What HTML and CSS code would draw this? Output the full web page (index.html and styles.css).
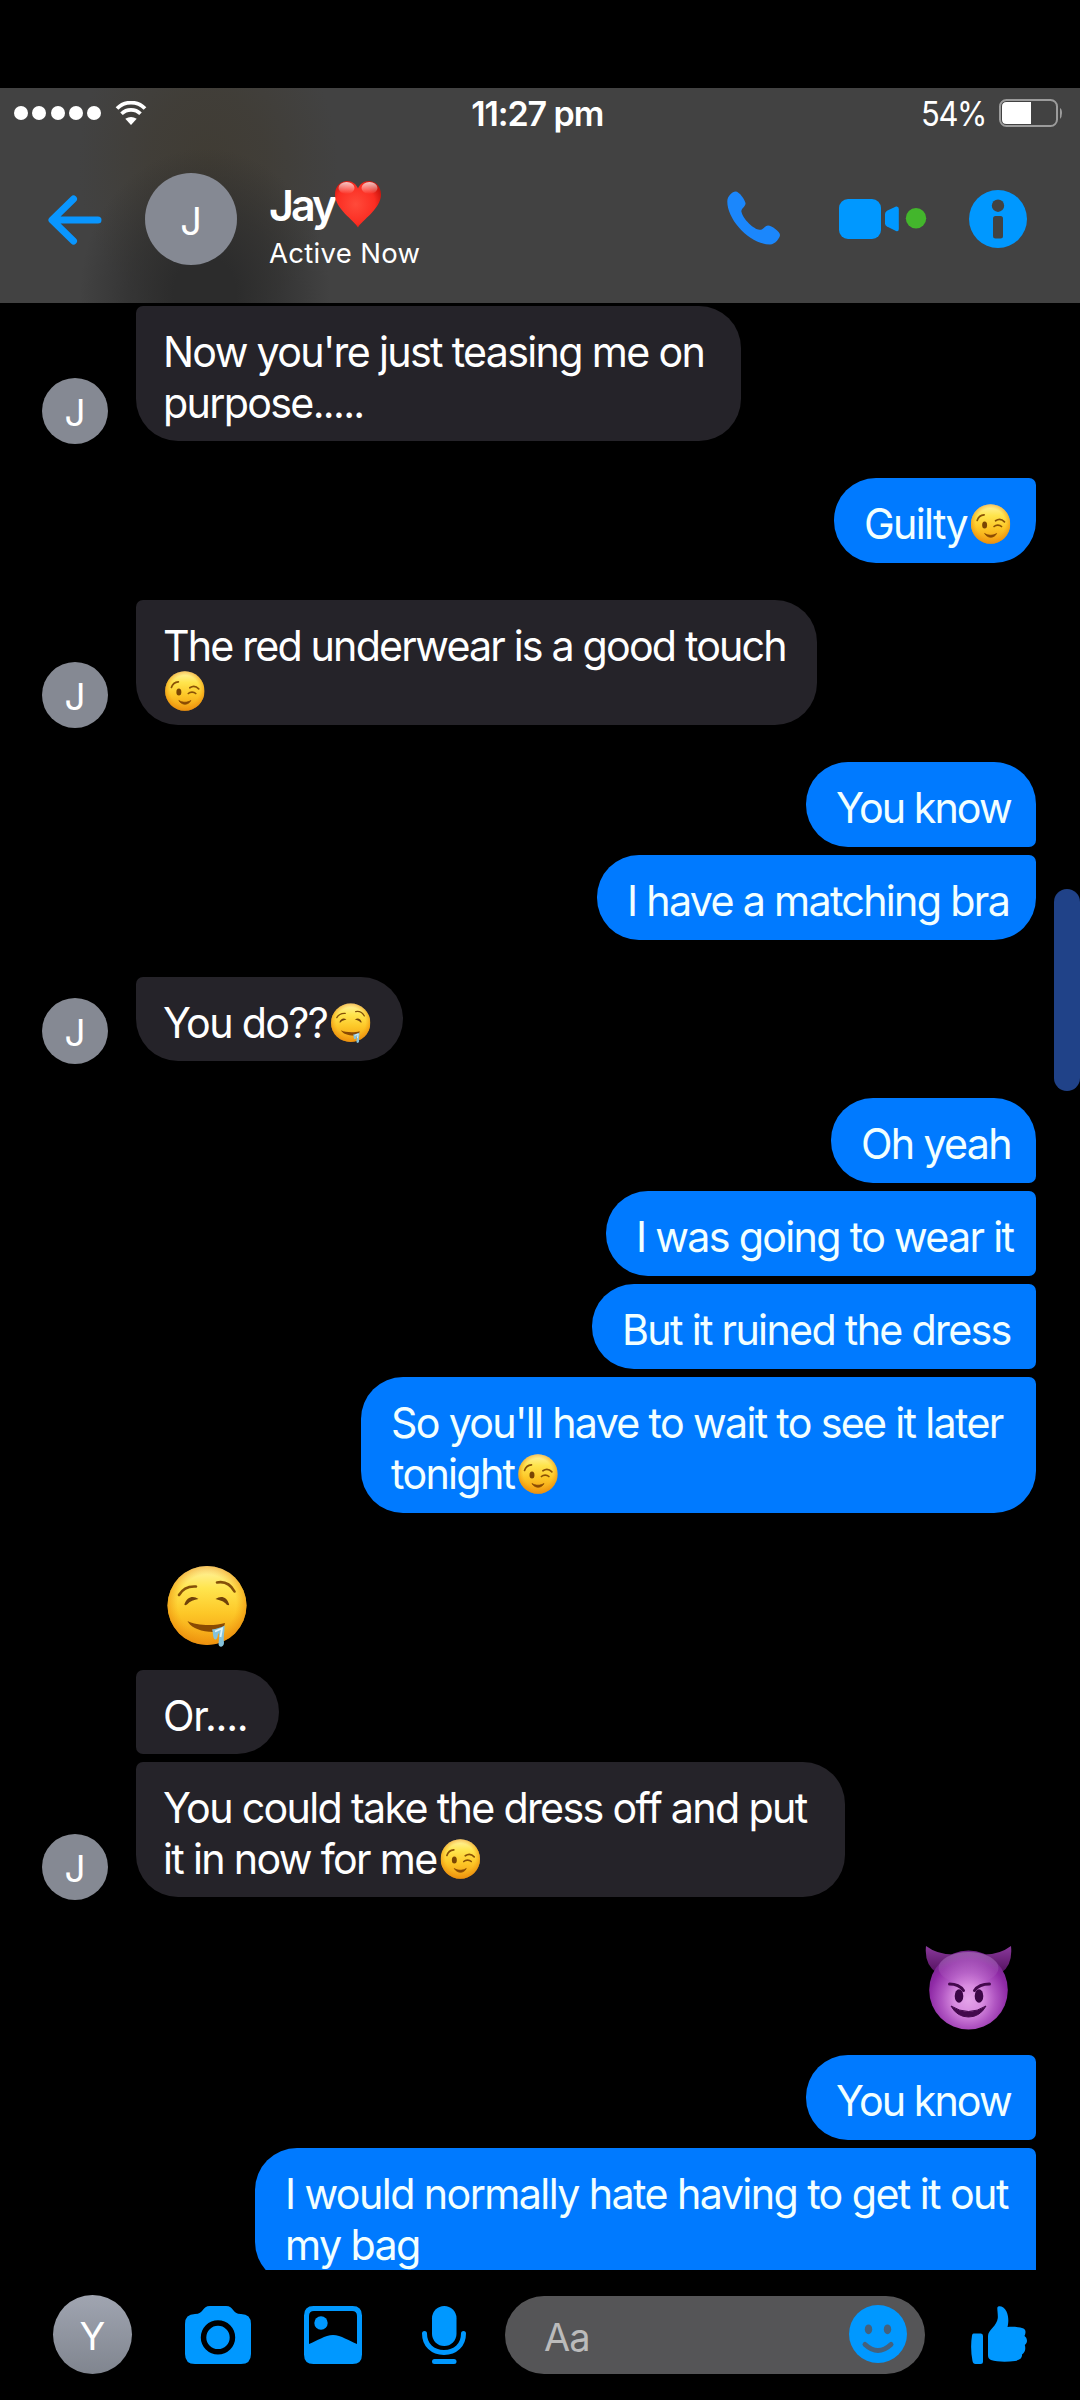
FILE: index.html
```
<!DOCTYPE html>
<html lang="en">
<head>
<meta charset="utf-8">
<title>Jay</title>
<link rel="stylesheet" href="styles.css">
</head>
<body>
<svg class="sprite" width="0" height="0" aria-hidden="true">
  <defs>
    <linearGradient id="face" x1="0" y1="0" x2="0" y2="1">
      <stop offset="0" stop-color="#fff3a8"/><stop offset=".28" stop-color="#ffe54e"/>
      <stop offset=".6" stop-color="#fdc727"/><stop offset="1" stop-color="#f29a11"/>
    </linearGradient>
    <radialGradient id="rim" cx=".5" cy=".48" r=".53">
      <stop offset=".7" stop-color="#f29a11" stop-opacity="0"/><stop offset="1" stop-color="#e98a0c" stop-opacity=".75"/>
    </radialGradient>
    <radialGradient id="heart" cx=".45" cy=".5" r=".6">
      <stop offset="0" stop-color="#ff4a3a"/><stop offset=".7" stop-color="#fb2d22"/><stop offset="1" stop-color="#c9150d"/>
    </radialGradient>
    <linearGradient id="gloss" x1="0" y1="0" x2="0" y2="1">
      <stop offset="0" stop-color="#fff" stop-opacity=".75"/><stop offset="1" stop-color="#fff" stop-opacity="0"/>
    </linearGradient>
    <radialGradient id="devil" cx=".5" cy=".62" r=".62">
      <stop offset="0" stop-color="#e4a4ea"/><stop offset=".3" stop-color="#d78adf"/><stop offset=".55" stop-color="#b055c2"/>
      <stop offset=".8" stop-color="#8f2aa6"/><stop offset="1" stop-color="#73268a"/>
    </radialGradient>
    <linearGradient id="horn" x1="0" y1="0" x2="0" y2="1">
      <stop offset="0" stop-color="#8a3a9c"/><stop offset="1" stop-color="#54105f"/>
    </linearGradient>
    <symbol id="wink" viewBox="0 0 40 40" preserveAspectRatio="none">
      <circle cx="20" cy="20" r="19.8" fill="url(#face)"/><circle cx="20" cy="20" r="19.8" fill="url(#rim)"/>
      <ellipse cx="14" cy="21" rx="2.5" ry="3.6" fill="#7a4503"/>
      <path d="M6.5 16.5C7.5 13 10 11 13.5 10.8M25 16.8C28 14.8 31.500 15.300 34 17.800M23.500 22.500C25.500 20.600 29 20.600 31 22.500" fill="none" stroke="#8a5206" stroke-width="1.7" stroke-linecap="round"/>
      <path d="M14 29.500C17 34.500 23.500 34.500 26 29.500C22.500 31.800 17.500 31.800 14 29.500Z" fill="#8a4a03" stroke="#8a4a03" stroke-width=".8" stroke-linejoin="round"/>
    </symbol>
    <symbol id="drool" viewBox="0 0 80 82" preserveAspectRatio="none">
      <circle cx="40" cy="40.500" r="39.500" fill="url(#face)"/><circle cx="40" cy="40.500" r="39.500" fill="url(#rim)"/>
      <path d="M12 30C16 23 22 21 29 21.500M50 17.500C58 16 64 20 67.500 26.500" fill="none" stroke="#845008" stroke-width="2.600" stroke-linecap="round"/>
      <path d="M17.500 39C20 32 26 30 31.500 34C27 35 23 36 20 39.500C18.500 40.500 17 40.500 17.500 39ZM48.500 34C54 30 60 32 62 39C62.500 40.500 61 40.500 59.500 39.500C57 36 53 35.500 48.500 34Z" fill="#70410a"/>
      <path d="M20.500 56C29 61 49 61 58 58C57 66 49 67.500 42 66.800C31 66 22.500 61 20.500 56Z" fill="#8a4a03"/>
      <path d="M45 64.500C49 64 54 62.500 57.500 60.500C58 66 56 71 57 78C56.500 83 51.500 83 51.500 78.500C52 74 52.500 70 51.500 68C50.500 70 51 74 48.500 74.500C45.500 74.500 46.500 67.500 45 64.500Z" fill="#85c3dc"/>
      <path d="M48 66.500L55 63.500L53.500 72" fill="none" stroke="#def5fa" stroke-width="1.800"/>
    </symbol>
    <symbol id="imp" viewBox="0 0 88 84">
      <path d="M1 0Q13 9 30 8.500L12 27Q-1 19 1 0ZM86 0Q74 9 58 8.500L76 27Q88 19 86 0Z" fill="url(#horn)"/>
      <ellipse cx="43.500" cy="44" rx="39.300" ry="39.600" fill="url(#devil)"/>
      <ellipse cx="43.500" cy="22" rx="30" ry="16" fill="url(#gloss)" opacity=".3"/>
      <path d="M24.500 38Q34 38 38.500 44.500M64.500 38Q54 38 49.500 44.500" fill="none" stroke="#43094c" stroke-width="3" stroke-linecap="round"/>
      <ellipse cx="34" cy="50" rx="4.300" ry="6.800" fill="#3b0646"/><ellipse cx="54" cy="50" rx="4.300" ry="6.800" fill="#3b0646"/>
      <path d="M26 60Q43.500 71 61 60Q55 71 43.500 71Q32 71 26 60Z" fill="#43094c" stroke="#43094c"/>
    </symbol>
  </defs>
</svg>

<div class="screen">
  <header class="header">
    <div class="status">
      <div class="signal"><i></i><i></i><i></i><i></i><i></i></div>
      <svg class="wifi" viewBox="0 0 32 24"><path d="M2 7.500A19.500 19.500 0 0 1 30 7.500" fill="none" stroke="#fff" stroke-width="3.700"/><path d="M6.500 12.800A13.500 13.500 0 0 1 25.500 12.800" fill="none" stroke="#fff" stroke-width="3.600"/><path d="M10.300 17.800Q16 14 21.700 17.800L16 24Z" fill="#fff"/></svg>
      <div class="time">11:27 pm</div>
      <div class="percent">54%</div>
      <svg class="battery" viewBox="0 0 64 30"><rect x="1" y="1" width="57" height="26" rx="6.500" fill="none" stroke="#9c9c9c" stroke-width="2"/><path d="M32 3V25H7.500Q3 25 3 20.500V7.500Q3 3 7.500 3Z" fill="#fff"/><path d="M61 9Q63 10 63 14T61 20Z" fill="#9c9c9c"/></svg>
    </div>
    <div class="contact">
      <svg class="back" viewBox="0 0 54 50"><path d="M50 25H5M25.500 4L4 25L25.500 46" fill="none" stroke="#0996ff" stroke-width="7" stroke-linecap="round" stroke-linejoin="round"/></svg>
      <div class="avatar avatar-large"><span>J</span></div>
      <div class="who">
        <div class="name"><span>Jay</span><svg class="heart" viewBox="0 0 48 48"><path d="M24 47.500C20 40 1 29 1 14.500C1 6 7 1 13 1C18.500 1 22.500 4.500 24 8.500C25.500 4.500 29.500 1 35 1C41 1 47 6 47 14.500C47 29 28 40 24 47.500Z" fill="url(#heart)"/><ellipse cx="12.500" cy="8" rx="8" ry="6" fill="url(#gloss)"/><ellipse cx="35.500" cy="8" rx="8" ry="6" fill="url(#gloss)"/></svg></div>
        <div class="presence">Active Now</div>
      </div>
      <svg class="phone" viewBox="0 0 54 54"><path d="M8.500 .5C12.500 .5 18 9 18.500 12C19 15.500 13.500 17.500 14.500 21C16 28 27 38.500 32.500 38.800C36.500 39 37.500 34.500 41 34.500C44.500 34.500 53 40.500 53 44C53 46.500 48.500 53.500 43 53.500C23 53.500 .3 29 .3 10.500C.3 5 5.500 .5 8.500 .5Z" fill="#1b87fc"/></svg>
      <svg class="video" viewBox="0 0 88 42"><rect width="42" height="40" y="1" rx="9" fill="#0098ff"/><path d="M46 16Q46 14 48 12.800L57 8.500Q59.800 8 59.800 11V31Q59.800 34 57 33L48 28.500Q46 27.500 46 25.500Z" fill="#0098ff"/><circle cx="77" cy="20.300" r="10.200" fill="#43b62c"/></svg>
      <svg class="info" viewBox="0 0 58 58"><circle cx="29" cy="29" r="29" fill="#0098ff"/><circle cx="29" cy="15.700" r="6.200" fill="#424242"/><rect x="24" y="26" width="10" height="22.500" rx="2.500" fill="#424242"/></svg>
    </div>
  </header>

  <main class="thread">
    <section class="group them">
      <div class="avatar"><span>J</span></div>
      <div class="stack"><div class="bubble last w605"><p>Now you're just teasing me on</p><p>purpose.....</p></div></div>
    </section>
    <section class="group us">
      <div class="bubble last w202"><p>Guilty<svg class="emoji"><use href="#wink"/></svg></p></div>
    </section>
    <section class="group them">
      <div class="avatar"><span>J</span></div>
      <div class="stack"><div class="bubble last w681"><p>The red underwear is a good touch</p><p class="emoji-line"><svg class="emoji"><use href="#wink"/></svg></p></div></div>
    </section>
    <section class="group us">
      <div class="bubble first w230"><p>You know</p></div>
      <div class="bubble last w439"><p>I have a matching bra</p></div>
    </section>
    <section class="group them">
      <div class="avatar"><span>J</span></div>
      <div class="stack"><div class="bubble last w267"><p>You do??<svg class="emoji"><use href="#drool"/></svg></p></div></div>
    </section>
    <section class="group us">
      <div class="bubble first w205"><p>Oh yeah</p></div>
      <div class="bubble w430"><p>I was going to wear it</p></div>
      <div class="bubble w444"><p>But it ruined the dress</p></div>
      <div class="bubble last w675"><p>So you'll have to wait to see it later</p><p>tonight<svg class="emoji"><use href="#wink"/></svg></p></div>
    </section>
    <section class="group them">
      <div class="avatar"><span>J</span></div>
      <div class="stack">
        <svg class="big-drool"><use href="#drool"/></svg>
        <div class="bubble w143"><p>Or....</p></div>
        <div class="bubble last w709"><p>You could take the dress off and put</p><p>it in now for me<svg class="emoji"><use href="#wink"/></svg></p></div>
      </div>
    </section>
    <section class="group us">
      <svg class="big-imp"><use href="#imp"/></svg>
      <div class="bubble w230"><p>You know</p></div>
      <div class="bubble w781"><p>I would normally hate having to get it out</p><p>my bag</p></div>
    </section>
  </main>
  <div class="scrollbar"></div>

  <footer class="composer">
    <div class="avatar avatar-me"><span>Y</span></div>
    <svg class="camera" viewBox="0 0 66 58"><path fill-rule="evenodd" d="M25 0H41C49 0 47 8 56 8Q66 8 66 18V48Q66 58 56 58H10Q0 58 0 48V18Q0 8 10 8C19 8 17 0 25 0ZM33 14.200A17.200 17.200 0 1 0 33 48.600A17.200 17.200 0 1 0 33 14.200ZM33 19.700A11.700 11.700 0 1 1 33 43.100A11.700 11.700 0 1 1 33 19.700Z" fill="#0098ff"/></svg>
    <svg class="gallery" viewBox="0 0 58 58"><path fill-rule="evenodd" d="M9.500 0H48.500Q58 0 58 9.500V48.500Q58 58 48.500 58H9.500Q0 58 0 48.500V9.500Q0 0 9.500 0ZM10 5Q5 5 5 10V38C13 35 21 29 29 29C37 29 45 35 53 38V10Q53 5 48 5Z" fill="#0098ff"/><circle cx="17" cy="17" r="6.700" fill="#0098ff"/></svg>
    <svg class="mic" viewBox="0 0 44 58"><rect x="10" y="0" width="24.500" height="40" rx="12.250" fill="#0098ff"/><path d="M2.500 27.500C2.500 39 10.500 46.500 22 46.500S41.500 39 41.500 27.500" fill="none" stroke="#0098ff" stroke-width="5" stroke-linecap="round"/><path d="M12.500 55.500H32" stroke="#0098ff" stroke-width="5" stroke-linecap="round"/></svg>
    <div class="field">
      <span>Aa</span>
      <svg class="smiley" viewBox="0 0 58 58"><circle cx="29" cy="29" r="29" fill="#0098ff"/><ellipse cx="19.500" cy="24.300" rx="3.700" ry="4.900" fill="#45617c"/><ellipse cx="38.500" cy="24.300" rx="3.700" ry="4.900" fill="#45617c"/><path d="M16 39.500Q29 51.500 42 39.500" fill="none" stroke="#45617c" stroke-width="5" stroke-linecap="round"/></svg>
    </div>
    <svg class="thumb" viewBox="0 0 56 58"><path d="M2.500 27.500H10Q12 27.500 12 30V55.500Q12 58 9.500 58H4.500Q2 58 1.500 55Q-1 42 1 29.500Q1.300 27.500 2.500 27.500Z" fill="#0098ff"/><path d="M26.300 2C26.300 -1 33 -.5 35.500 5.500C38 11 37.500 17 36.500 21C42 20.500 49 21 52.500 22.500C55.500 24 54.500 28 53.500 30C56.500 32 57 37 53.800 39C55 43 54 46.500 51 48.500C51.500 52 49 54 44 55C36 56 26 56 20 54C17.500 53 17 51 17 49V30C17 24 26 20 26.800 12C27 8 26.300 5 26.300 2Z" fill="#0098ff"/></svg>
  </footer>
</div>
</body>
</html>
```
FILE: styles.css
```
* { box-sizing: border-box; }
body { margin: 0; background: #000; font-family: Inter, "Liberation Sans", sans-serif; color: #fff; }
p { margin: 0; }
svg { display: block; flex: none; }
.sprite { position: absolute; }
.screen { position: relative; display: flex; flex-direction: column; width: 1080px; height: 2400px; padding-top: 88px; overflow: hidden; }

.header {
  display: flex; flex-direction: column; height: 215px; flex: none;
  background:
    radial-gradient(ellipse 125px 145px at 205px 205px, #2c2c2c 25%, rgba(44,44,44,.6) 60%, rgba(66,66,66,0) 100%),
    radial-gradient(ellipse 130px 160px at 208px 75px, #403c34 0%, rgba(64,60,52,.7) 45%, rgba(66,66,66,0) 100%),
    #424242;
}
.status { display: flex; align-items: center; height: 50px; padding-left: 14px; font-size: 34px; line-height: 50px; }
.signal { display: flex; gap: 4.300px; }
.signal i { width: 14px; height: 14px; border-radius: 50%; background: #fff; }
.wifi { width: 32px; height: 24px; margin-left: 14px; }
.time { width: 138px; margin-left: 324px; padding-top: 1px; font-weight: 600; letter-spacing: -1.100px; white-space: nowrap; }
.percent { width: 66px; margin-left: 311.500px; padding-top: 1px; letter-spacing: -1.500px; white-space: nowrap; transform: scaleX(.91); transform-origin: left; }
.battery { width: 64px; height: 30px; margin: 1px 0 0 12.500px; }

.contact { display: flex; height: 165px; align-items: flex-start; padding-left: 48px; }
.back { width: 54px; height: 50px; margin-top: 57px; }
.avatar { display: flex; align-items: center; justify-content: center; flex: none; width: 66px; height: 66px; border-radius: 50%; background: #858993; font-size: 37px; line-height: 46px; }
.avatar span { padding-top: 3px; }
.avatar-large { width: 92px; height: 92px; margin: 35px 0 0 43px; font-size: 38px; }
.who { width: 170px; margin: 40px 0 0 32px; }
.name { display: flex; height: 54px; font-size: 43px; line-height: 54px; font-weight: 600; letter-spacing: -3px; }
.name span { width: 65px; }
.heart { width: 48px; height: 48px; margin-top: 2px; }
.presence { font-size: 27.500px; line-height: 34px; margin-top: 4px; letter-spacing: .3px; white-space: nowrap; }
.phone { width: 54px; height: 54px; margin: 53px 0 0 288px; }
.video { width: 88px; height: 42px; margin: 60px 0 0 58px; }
.info { width: 58px; height: 58px; margin: 52px 0 0 42px; }

.thread { display: flex; flex-direction: column; gap: 37px; height: 1967px; flex: none; padding: 3px 44px 0 42px; overflow: hidden; }
.group { display: flex; flex: none; }
.them { align-items: flex-end; gap: 28px; }
.them .avatar { margin-bottom: -3px; }
.stack { display: flex; flex-direction: column; gap: 8px; }
.us { flex-direction: column; align-items: flex-end; gap: 8px; }
.bubble { flex: none; padding: 19.500px 0 14.500px 29.500px; font-size: 42.500px; line-height: 51px; letter-spacing: -1.750px; white-space: nowrap; }
/* narrows the face slightly to the proportions of the system font */
.bubble p { transform: scaleX(.97); transform-origin: left; }
.us .bubble { background: #007aff; color: #f2ffff; border-radius: 42px 7px 7px 42px; }
.us .first { border-top-right-radius: 42px; }
.us .last { border-bottom-right-radius: 42px; }
.them .bubble { background: #252329; border-radius: 7px 42px 42px 7px; padding-bottom: 13.500px; padding-left: 26.500px; }
.them .last { border-bottom-left-radius: 42px; }
.emoji { display: inline-block; width: 41px; height: 40px; margin-left: 4px; vertical-align: -5px; }
.emoji-line { height: 41px; line-height: 41px; }
.emoji-line .emoji { margin-left: 2px; vertical-align: top; }
.big-drool { width: 80px; height: 82px; margin: 15px 0 15px 31px; }
.big-imp { width: 88px; height: 84px; margin: 12px 23.500px 17px 0; }
.w605 { width: 605px; } .w202 { width: 202px; } .w681 { width: 681px; letter-spacing: -1.900px; }
.w230 { width: 230px; letter-spacing: -2px; } .w439 { width: 439px; } .w267 { width: 267px; }
.w205 { width: 205px; } .w430 { width: 430px; } .w444 { width: 444px; }
.w675 { width: 675px; } .w143 { width: 143px; letter-spacing: -1.300px; } .w709 { width: 709px; } .w781 { width: 781px; letter-spacing: -1.650px; }

.scrollbar { position: absolute; right: 0; top: 889px; width: 26px; height: 202px; border-radius: 13px; background: #204288; }

.composer { display: flex; align-items: center; height: 130px; padding-left: 53px; }
.avatar-me { width: 79px; height: 79px; margin-bottom: 1px; background: linear-gradient(#a0a5b1, #80858f); font-size: 38px; }
.camera { width: 66px; height: 58px; margin-left: 53px; }
.gallery { width: 58px; height: 58px; margin-left: 53px; }
.mic { width: 44px; height: 58px; margin-left: 60px; }
.field { display: flex; align-items: center; justify-content: space-between; width: 420px; height: 78px; margin-left: 39px; padding: 0 18px 0 39px; border-radius: 39px; background: #555557; color: #bbb; font-size: 38px; letter-spacing: -1px; }
.field span { padding-top: 4px; }
.smiley { width: 58px; height: 58px; margin-bottom: 2px; }
.thumb { width: 56px; height: 58px; margin-left: 46px; }
```
